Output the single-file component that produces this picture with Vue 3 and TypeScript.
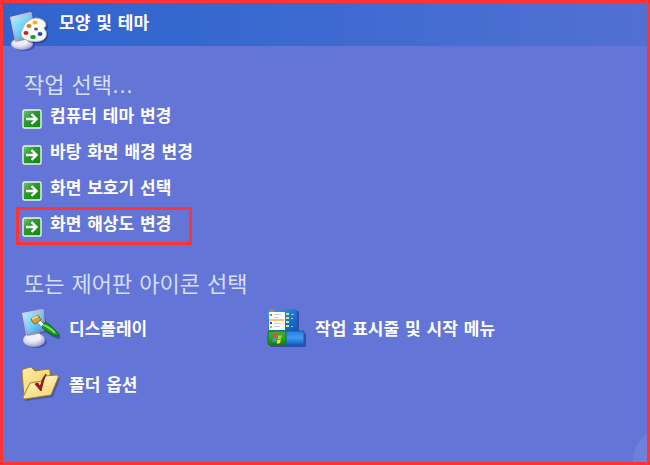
<script setup lang="ts">
interface IconLink {
  id: 'display' | 'taskbar' | 'folder'
  label: string
}

const tasks: { label: string; marked?: boolean }[] = [
  { label: '컴퓨터 테마 변경' },
  { label: '바탕 화면 배경 변경' },
  { label: '화면 보호기 선택' },
  { label: '화면 해상도 변경', marked: true },
]

const icons: IconLink[] = [
  { id: 'display', label: '디스플레이' },
  { id: 'taskbar', label: '작업 표시줄 및 시작 메뉴' },
  { id: 'folder', label: '폴더 옵션' },
]
</script>

<template>
  <div class="panel">
    <svg class="defs" width="0" height="0" aria-hidden="true">
      <defs>
        <linearGradient id="screen" x1="0" y1="0" x2="1" y2="1">
          <stop offset="0" stop-color="#b4f2ff" />
          <stop offset="0.5" stop-color="#6fd0fa" />
          <stop offset="1" stop-color="#2a9bf0" />
        </linearGradient>
        <linearGradient id="frame" x1="0" y1="0" x2="1" y2="1">
          <stop offset="0" stop-color="#e4e6f2" />
          <stop offset="1" stop-color="#6c76a4" />
        </linearGradient>
        <radialGradient id="base" cx="0.4" cy="0.3" r="0.7">
          <stop offset="0" stop-color="#ffffff" />
          <stop offset="0.6" stop-color="#dcdcf0" />
          <stop offset="1" stop-color="#9a9cc8" />
        </radialGradient>
        <linearGradient id="go" x1="0" y1="0" x2="1" y2="1">
          <stop offset="0" stop-color="#7cc67c" />
          <stop offset="0.4" stop-color="#2c9a30" />
          <stop offset="1" stop-color="#0b8a0b" />
        </linearGradient>
        <linearGradient id="folderBack" x1="0" y1="0" x2="1" y2="1">
          <stop offset="0" stop-color="#fff0a8" />
          <stop offset="1" stop-color="#f0c456" />
        </linearGradient>
        <linearGradient id="folderFront" x1="0" y1="0" x2="0.6" y2="1">
          <stop offset="0" stop-color="#fffbd6" />
          <stop offset="1" stop-color="#f8d873" />
        </linearGradient>
        <linearGradient id="menuBlue" x1="0" y1="0" x2="1" y2="1">
          <stop offset="0" stop-color="#3f9be6" />
          <stop offset="1" stop-color="#0a55b8" />
        </linearGradient>
        <linearGradient id="barBlue" x1="0" y1="0" x2="0" y2="1">
          <stop offset="0" stop-color="#2b7ddc" />
          <stop offset="0.5" stop-color="#3f9bf0" />
          <stop offset="1" stop-color="#0f5cc4" />
        </linearGradient>
        <linearGradient id="startGreen" x1="0" y1="0" x2="0" y2="1">
          <stop offset="0" stop-color="#46a838" />
          <stop offset="0.5" stop-color="#2fa52a" />
          <stop offset="1" stop-color="#107a12" />
        </linearGradient>
      </defs>
    </svg>

    <header class="head">
      <svg class="icon" viewBox="0 0 40 40" aria-hidden="true">
        <ellipse cx="15" cy="34.500" rx="11" ry="5.500" fill="#27368c" opacity="0.5" />
        <ellipse cx="13" cy="33" rx="11" ry="6" fill="url(#base)" />
        <path d="M8 29 L17 26 L19 32 Q13 35 8 32 Z" fill="#f1f1fa" />
        <path d="M1 6 L21 1 Q23 1 23 3 L26 27 L6 31 Z" fill="url(#frame)" />
        <path d="M3 8 L21 4 L24 25 L8 28 Z" fill="url(#screen)" />
        <path d="M15 20 Q18 9 28 8 Q39 9 39 16 Q36 19 39 22 Q40 30 32 32 Q20 34 15 27 Q12 24 15 20 Z" fill="#1c2f7c" opacity="0.6" />
        <path d="M13 19 Q17 8 27 7 Q37 8 37 15 Q33 17 37 20 Q39 28 31 30 Q19 32 13 26 Q11 23 13 19 Z" fill="#fbfaf6" stroke="#b9b5bd" />
        <ellipse cx="20" cy="15" rx="2.500" ry="2" fill="#dd7b12" />
        <ellipse cx="26" cy="11.500" rx="2.500" ry="2" fill="#f0b51a" />
        <ellipse cx="27" cy="18" rx="2" ry="1.500" fill="#56587c" />
        <ellipse cx="17" cy="22" rx="2.500" ry="2" fill="#c92323" />
        <ellipse cx="24" cy="26" rx="2.800" ry="2" fill="#229b35" />
        <ellipse cx="31" cy="23" rx="2.500" ry="2" fill="#254ec4" />
      </svg>
      <h1>모양 및 테마</h1>
    </header>

    <main class="body">
      <h2>작업 선택...</h2>
      <ul class="tasks">
        <li v-for="t in tasks" :key="t.label">
          <a href="#" class="task" :class="{ marked: t.marked }">
            <svg class="go" viewBox="0 0 20 20" aria-hidden="true">
              <rect x="1" y="1" width="18" height="18" rx="1.500" fill="url(#go)" stroke="#eef4ee" stroke-width="1.400" />
              <path d="M4 10 H14 M9.500 5 L14.500 10 L9.500 15" fill="none" stroke="#fff" stroke-width="2.400" />
            </svg>
            <span>{{ t.label }}</span>
          </a>
        </li>
      </ul>

      <h2 class="second">또는 제어판 아이콘 선택</h2>
      <ul class="icons">
        <li v-for="i in icons" :key="i.id">
          <a href="#" class="applet">
            <svg v-if="i.id === 'display'" class="icon" viewBox="0 0 40 40" aria-hidden="true">
              <ellipse cx="15" cy="33" rx="11" ry="6" fill="#27368c" opacity="0.5" />
              <ellipse cx="13" cy="31" rx="11" ry="7" fill="url(#base)" />
              <path d="M7 25 L18 22 L20 30 Q13 34 7 30 Z" fill="#f1f1fa" />
              <path d="M3 5 L23 1 L27 23 L6 27 Z" fill="#27368c" opacity="0.5" />
              <path d="M1 4 L21 0 Q23 0 23 2 L25 22 L5 26 Z" fill="url(#frame)" />
              <path d="M3 6 L21 3 L23 20 L7 24 Z" fill="url(#screen)" />
              <path d="M22 17 Q27 16 39 27 Q40 30 37 30 Q27 27 22 19 Z" fill="#1b2f6e" opacity="0.5" />
              <path d="M20 15 Q24 12 29 16 L38 25 Q39 28 36 27 Q25 24 20 17 Z" fill="#17981e" stroke="#0b6a12" />
              <path d="M22 16 Q27 17 34 24" fill="none" stroke="#74e45e" stroke-width="2" />
              <path d="M15 12 L18 10 L23 15 L20 18 Z" fill="#e8f3fb" stroke="#6e8ba3" />
              <path d="M10 10 L17 6 L20 11 L14 15 Q11 14 10 10 Z" fill="#d7a03c" stroke="#94621d" />
              <path d="M11 10 L17 7" stroke="#f7dc91" stroke-width="1.500" />
            </svg>
            <svg v-else-if="i.id === 'taskbar'" class="icon" viewBox="0 0 40 40" aria-hidden="true">
              <rect x="3" y="2" width="29" height="22" rx="1" fill="#1e2f80" opacity="0.6" />
              <rect x="3" y="24" width="36" height="14" rx="1" fill="#1e2f80" opacity="0.6" />
              <rect x="1" y="0" width="29" height="23" rx="2" fill="url(#menuBlue)" />
              <rect x="2" y="3" width="16" height="18" fill="#fbfcff" />
              <rect x="2" y="10" width="15" height="2" fill="#f7c46a" />
              <path d="M7 5.500 H14 M7 8.500 H12 M7 14.500 H14 M7 17.500 H13" stroke="#c3cfe6" />
              <rect x="3" y="1" width="4" height="2" fill="#e27444" />
              <rect x="3" y="5" width="2" height="2" fill="#3fae48" />
              <rect x="3" y="13" width="2" height="2" fill="#2444cf" />
              <rect x="3" y="17" width="2" height="2" fill="#dfb52b" />
              <path d="M19 5 H22 M19 9 H22 M19 13 H22 M19 17 H22" stroke="#c8e59a" stroke-width="2" />
              <path d="M24 5.500 H27 M24 9.500 H26 M24 17.500 H26" stroke="#8ec8f7" />
              <rect x="18" y="22" width="19" height="14" rx="1" fill="url(#barBlue)" stroke="#1458b8" />
              <rect x="1" y="22" width="18" height="14" rx="1" fill="url(#startGreen)" stroke="#177719" />
              <path d="M7 25 Q9 24 11 25 L10 29 Q8 28 6 29 Z" fill="#ef4b2d" />
              <path d="M11.500 26 Q13 27 15 26 L14 30 Q12 31 10.500 30 Z" fill="#8fe043" />
              <path d="M6 29.500 Q8 28.500 9.500 29.500 L8.500 33 Q7 32 5 33 Z" fill="#4b8ff0" />
              <path d="M10.500 30.500 Q12 31.500 14 30.500 L13 34 Q11 35 9.500 34 Z" fill="#ffd43e" />
            </svg>
            <svg v-else class="icon" viewBox="0 0 40 40" aria-hidden="true">
              <path d="M3 9 L12 5 L17 8 L30 7 L32 12 L39 13 L32 32 L4 36 Z" fill="#27368c" opacity="0.5" />
              <path d="M1 6 Q1 4 3 4 L9 2 Q11 2 12 4 L14 6 L27 4 Q29 4 29 6 L31 26 L3 33 Z" fill="url(#folderBack)" stroke="#9d7a24" />
              <path d="M2 32 L9 18 L21 16 L23 11 L36 10 Q38 11 37 13 L30 30 L4 34 Q2 34 2 32 Z" fill="url(#folderFront)" stroke="#a17f2b" />
              <path d="M14 19 L17 18 L19 22 Q21 14 25 9 Q22 16 20 26 Z" fill="#9d1715" stroke="#8c1513" />
            </svg>
            <span>{{ i.label }}</span>
          </a>
        </li>
      </ul>
    </main>
    <div class="watermark"></div>
  </div>
</template>

<style>
body {
  margin: 0;
}
</style>

<style scoped>
.panel {
  position: relative;
  box-sizing: border-box;
  min-height: 100vh;
  border: 3px solid #ff3333;
  background: #6375d6;
  overflow: hidden;
  color: #fff;
  font-family: "DejaVu Sans", "Noto Sans CJK KR", sans-serif;
}

.defs {
  position: absolute;
}

.head {
  display: flex;
  align-items: flex-start;
  gap: 10px;
  box-sizing: border-box;
  height: 43px;
  padding: 8px 6px 0;
  background: linear-gradient(to right, #3165ce, #3568cf 30%, #5270d3);
}

.icon {
  display: block;
  flex: none;
  width: 40px;
  height: 40px;
}

h1 {
  margin: 0;
  font-size: 17px;
  font-weight: 700;
  line-height: 24px;
}

.body {
  padding: 27px 18px 20px;
}

h2 {
  margin: 0;
  padding-left: 3px;
  color: #d6dff7;
  font-size: 22px;
  font-weight: 400;
  line-height: 26px;
}

.second {
  margin: 27px 0 11px;
}

ul {
  margin: 0;
  padding: 0;
  list-style: none;
}

a {
  color: inherit;
  text-decoration: none;
  font-size: 17px;
  font-weight: 700;
  line-height: 24px;
}

.tasks {
  display: grid;
  justify-items: start;
}

.task {
  display: flex;
  align-items: flex-start;
  gap: 8px;
  box-sizing: border-box;
  height: 36px;
  margin-left: -5px;
  padding: 2px 18px 0 3px;
  border: 3px solid transparent;
}

.go {
  flex: none;
  width: 20px;
  height: 20px;
  margin-top: 5px;
}

.task.marked {
  height: 38px;
  border-color: #ff3333;
}

.icons {
  display: grid;
  grid-template-columns: 246px 1fr;
  row-gap: 16px;
}

.applet {
  display: flex;
  align-items: center;
  gap: 8px;
}

.watermark {
  position: absolute;
  right: -44px;
  bottom: -28px;
  width: 58px;
  height: 60px;
  border-radius: 50%;
  background: #6d80da;
}
</style>
